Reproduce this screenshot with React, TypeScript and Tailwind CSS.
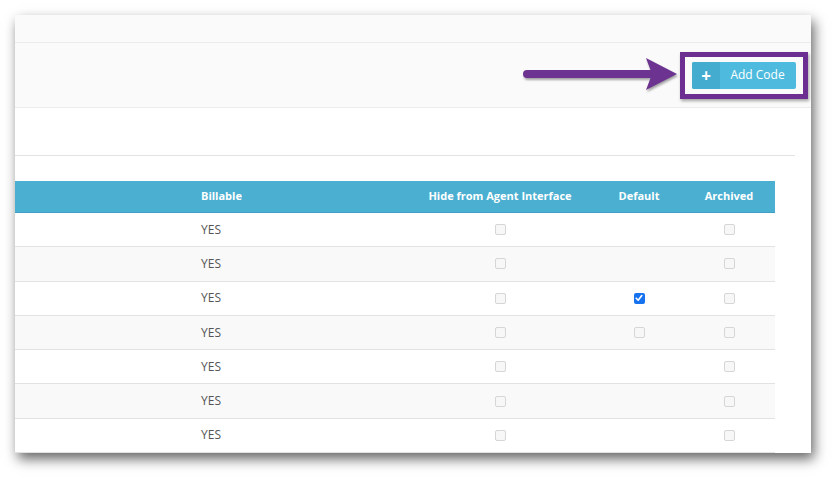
import React from "react";

type Row = { billable: string; hide: boolean; def?: boolean; archived: boolean };

const ROWS: Row[] = [
  { billable: "YES", hide: false, archived: false },
  { billable: "YES", hide: false, archived: false },
  { billable: "YES", hide: false, def: true, archived: false },
  { billable: "YES", hide: false, def: false, archived: false },
  { billable: "YES", hide: false, archived: false },
  { billable: "YES", hide: false, archived: false },
  { billable: "YES", hide: false, archived: false },
];

const GRID = "grid grid-cols-[186px_224px_150px_128px_52px_20px] items-center";

function Box({ checked }: { checked: boolean }) {
  if (checked) {
    return (
      <span className="grid h-[11px] w-[11px] place-items-center rounded-[2px] bg-[#1672ee]">
        <svg width="8" height="8" viewBox="0 0 8 8">
          <path d="M1.2 4.2 L3.2 6.2 L6.8 1.6" fill="none" stroke="#fff" strokeWidth="1.6" strokeLinecap="round" strokeLinejoin="round" />
        </svg>
      </span>
    );
  }
  return <span className="block h-[11px] w-[11px] rounded-[2px] border border-[#d6d6d6] bg-[#f7f7f7]" />;
}

function Arrow() {
  return (
    <svg width="158" height="34" viewBox="0 0 158 34" className="drop-shadow-[1px_2px_1px_rgba(0,0,0,0.35)]">
      <line x1="5" y1="16" x2="132" y2="16" stroke="#6c3391" strokeWidth="8" strokeLinecap="round" />
      <polygon points="124,0 155,16 124,32 130,16" fill="#6c3391" />
    </svg>
  );
}

export default function App() {
  return (
    <div
      className="h-[479px] w-[836px] bg-white pl-[15px] pt-[15px]"
      style={{ fontFamily: '"Open Sans", "Liberation Sans", sans-serif' }}
    >
      <div className="flex h-[438px] w-[796px] flex-col overflow-hidden bg-white shadow-[3px_6px_12px_rgba(0,0,0,0.6)]">
        <div className="h-[28px] shrink-0 border-b border-[#ececec] bg-[#fafafa]" />
        <div className="flex h-[65px] shrink-0 items-center justify-end border-b border-[#ececec] bg-[#fafafa] pr-[3px]">
          <Arrow />
          <div className="border-[5px] border-[#6c2f91] bg-[#fafafa] px-[7px] py-[5px] shadow-[1px_2px_3px_rgba(0,0,0,0.35)]">
            <button className="flex h-[27px] w-[104px] items-stretch overflow-hidden rounded-[2px] bg-[#4ebbde] text-[12px] text-white">
              <span className="grid w-[28px] place-items-center bg-[#44adcf] text-[17px] font-bold leading-none">+</span>
              <span className="flex flex-1 items-center justify-center pr-[1px]">Add Code</span>
            </button>
          </div>
        </div>
        <div className="mr-[16px] h-[48px] shrink-0 border-b border-[#e3e3e3]" />
        <div className="h-[25px] shrink-0" />
        <div className="w-[760px]">
          <div className={`${GRID} h-[32px] whitespace-nowrap border-b border-[#3f9fc2] bg-[#4bafd1] text-[11px] font-bold text-white`}>
            <span />
            <span>Billable</span>
            <span className="text-center">Hide from Agent Interface</span>
            <span className="text-center">Default</span>
            <span className="text-center">Archived</span>
            <span />
          </div>
          {ROWS.map((r, i) => (
            <div
              key={i}
              className={`${GRID} h-[34.3px] border-b border-[#e2e2e2] text-[12px] text-[#555] ${i % 2 === 1 ? "bg-[#f9f9f9]" : "bg-white"}`}
            >
              <span />
              <span>{r.billable}</span>
              <span className="flex justify-center"><Box checked={r.hide} /></span>
              <span className="flex justify-center">{r.def !== undefined && <Box checked={r.def} />}</span>
              <span className="flex justify-center"><Box checked={r.archived} /></span>
              <span />
            </div>
          ))}
        </div>
      </div>
    </div>
  );
}
